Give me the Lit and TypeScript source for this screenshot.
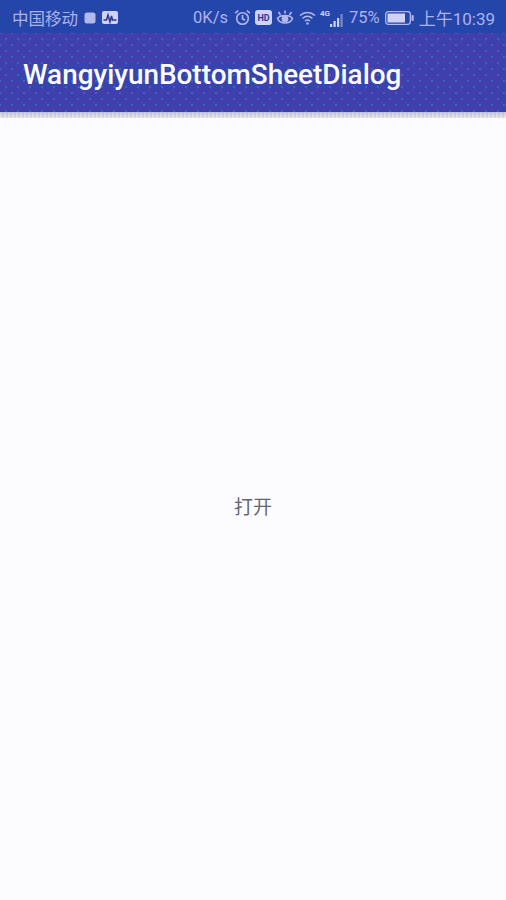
import { LitElement, html, css } from "lit";
import { customElement } from "lit/decorators.js";

@customElement("app-root")
export class AppRoot extends LitElement {
  static styles = css`
    :host { display: flex; flex-direction: column; width: 506px; height: 900px; background: #fcfcff; font-family: Roboto, "Noto Sans CJK SC", sans-serif; overflow: hidden; }
    .status { height: 33px; flex: none; background: #2445a9; color: #aeb2ec; display: flex; align-items: center; justify-content: space-between; padding: 2px 11px 0 12px; font-size: 16.5px; box-sizing: border-box; }
    .group { display: flex; align-items: center; }
    .status svg { display: block; flex: none; }
    .carrier { margin-right: 6px; }
    .time { margin-left: 5px; font-size: 17px; }
    .toolbar { height: 79px; flex: none; box-sizing: border-box; display: flex; align-items: center; padding: 4px 0 0 23px; color: #fbfbff; font-size: 27.9px; font-weight: 500;
      background-color: #3a40a8;
      background-image:
        radial-gradient(circle, rgba(48,130,190,.55) 1px, transparent 1.6px),
        radial-gradient(circle, rgba(48,130,190,.55) 1px, transparent 1.6px),
        repeating-conic-gradient(#3b3eab 0 25%, #3349af 0 50%);
      background-size: 12px 12px, 12px 12px, 2px 2px;
      background-position: 0 0, 6px 6px, 0 0;
    }
    .shadow { height: 6px; flex: none; background-image: linear-gradient(#d4d6f2, #eeeef8 60%, #fcfcff), repeating-linear-gradient(90deg, #f0f0d8 0 2px, #dadcf4 2px 4px); background-blend-mode: multiply; }
    .main { flex: 1; display: flex; align-items: center; justify-content: center; padding-bottom: 7px; }
    .open { font-size: 19px; color: #666672; font-family: "Noto Sans CJK SC", sans-serif; }
  `;

  render() {
    return html`
      <div class="status">
        <div class="group">
          <span class="carrier">中国移动</span>
          <svg width="12" height="12" viewBox="0 0 12 12"><rect x="0.5" y="0.5" width="11" height="11" rx="2.5" fill="#b4b8ee"/></svg>
          <svg style="margin-left:6px" width="16" height="13" viewBox="0 0 16 13"><rect width="16" height="13" rx="2" fill="#cfd1f5"/><path d="M1.500 9h3l1.500-5 2 7 1.500-6 1 4h4" fill="none" stroke="#2b3a8f" stroke-width="1.500"/></svg>
        </div>
        <div class="group">
          <span style="margin-right:6px">0K/s</span>
          <svg width="17" height="17" viewBox="0 0 17 17" fill="none" stroke="#b4b8ee" stroke-width="1.600"><circle cx="8.500" cy="9.500" r="5.800"/><path d="M8.500 6v3.800l2.500 1.400M1.200 4.200 4.200 1.500M15.800 4.200l-3-2.700"/></svg>
          <svg style="margin-left:4px" width="17" height="15" viewBox="0 0 17 15"><rect width="17" height="15" rx="3" fill="#cfd1f5"/><text x="8.500" y="11" font-size="9" font-weight="700" text-anchor="middle" fill="#2b3a8f" font-family="Roboto">HD</text></svg>
          <svg style="margin-left:4px" width="18" height="17" viewBox="0 0 18 17" fill="none" stroke="#b4b8ee" stroke-width="1.600"><path d="M1.500 9.500C4 5.500 14 5.500 16.500 9.500 14 15.500 4 15.500 1.500 9.500Z"/><circle cx="9" cy="10" r="2.600" fill="#b4b8ee"/><path d="M2.500 3 4.500 6M15.500 3l-2 3M9 1.500v3"/></svg>
          <svg style="margin-left:5px" width="17" height="14" viewBox="0 0 17 14" fill="none" stroke="#b4b8ee" stroke-width="1.600"><path d="M1 4.500c4.500-4 10.500-4 15 0M3.600 7.400c3-2.600 6.800-2.600 9.800 0M6 10c1.600-1.300 3.400-1.300 5 0"/><circle cx="8.500" cy="12.500" r="1.200" fill="#b4b8ee" stroke="none"/></svg>
          <svg style="margin-left:4px" width="26" height="20" viewBox="0 0 26 20"><text x="0" y="7.500" font-size="8" font-weight="700" fill="#cfd1f5" font-family="Roboto">4G</text><g fill="#cfd1f5"><rect x="10" y="16" width="2.200" height="3"/><rect x="13.500" y="13" width="2.200" height="6"/><rect x="17" y="10" width="2.200" height="9"/></g><rect x="20.500" y="6" width="2.200" height="13" fill="#7f86cf"/></svg>
          <span style="margin-left:3px">75%</span>
          <svg style="margin-left:5px" width="29" height="14" viewBox="0 0 29 14"><rect x="0.700" y="0.700" width="24.600" height="12.600" rx="2.500" fill="none" stroke="#b4b8ee" stroke-width="1.300"/><rect x="2.500" y="2.500" width="17.500" height="9" fill="#cfd1f5"/><rect x="26.500" y="4" width="2.200" height="6" rx="1" fill="#b4b8ee"/></svg>
          <span class="time">上午10:39</span>
        </div>
      </div>
      <div class="toolbar">WangyiyunBottomSheetDialog</div>
      <div class="shadow"></div>
      <div class="main"><span class="open">打开</span></div>
    `;
  }
}
